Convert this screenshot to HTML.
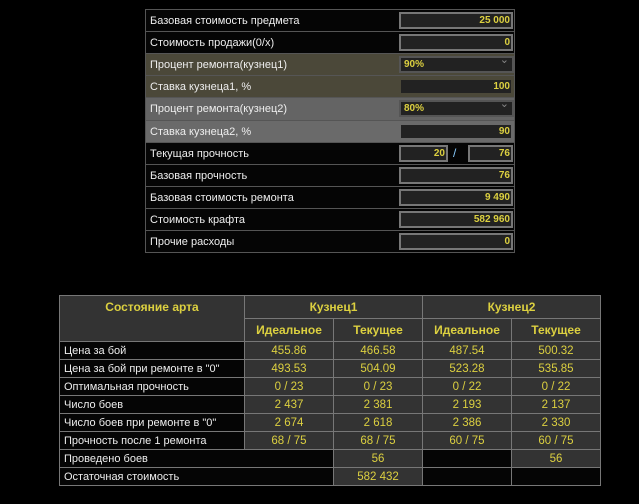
<!DOCTYPE html>
<html><head><meta charset="utf-8"><style>
body{margin:0;background:#000;width:639px;height:504px;overflow:hidden;font-family:"Liberation Sans","DejaVu Sans",sans-serif;position:relative}
.t{position:absolute;left:145px;top:9px;width:368px;border:1px solid #555;border-bottom:none}
.r{height:21px;border-bottom:1px solid #555;position:relative;color:#eee;font-size:11px;background:#050505}
.r .l{position:absolute;left:4px;top:5px}
.in{position:absolute;left:253px;top:2px;width:109px;height:13px;border:2px solid #777;background:#222;color:#dcd040;font-weight:bold;font-size:10px;text-align:right;line-height:13px;padding-right:1px;box-sizing:content-box}
.sel{text-align:left;padding-left:3px;width:107px;border-color:#555}
.sel:after{content:"⌄";position:absolute;right:3px;top:-4px;color:#888;font-weight:normal;font-size:11px}
.b{position:absolute;left:59px;top:295px;border-collapse:collapse;font-size:11.5px}
.b td{border:1px solid #777;height:17px;padding:0 4px;background:#333;color:#dcd040;text-align:center}
.b td.l{background:#050505;color:#eee;text-align:left;font-size:11px}
.b td.h{font-weight:bold;font-size:12px;height:22px}
.b td.k{background:#050505}
</style></head><body>
<div class="t">
<div class="r"><span class="l">Базовая стоимость предмета</span><div class="in">25 000</div></div>
<div class="r"><span class="l">Стоимость продажи(0/x)</span><div class="in">0</div></div>
<div class="r" style="background:#4b4839"><span class="l">Процент ремонта(кузнец1)</span><div class="in sel">90%</div></div>
<div class="r" style="background:#4b4839"><span class="l">Ставка кузнеца1, %</span><div class="in" style="border-color:#4b4839">100</div></div>
<div class="r" style="background:#646464;height:22px"><span class="l">Процент ремонта(кузнец2)</span><div class="in sel">80%</div></div>
<div class="r" style="background:#6a6a6a"><span class="l">Ставка кузнеца2, %</span><div class="in" style="border-color:#6a6a6a">90</div></div>
<div class="r"><span class="l">Текущая прочность</span><div class="in" style="width:44px">20</div><span style="position:absolute;left:307px;top:3px;color:#8cf;font-size:12px">/</span><div class="in" style="left:322px;width:40px">76</div></div>
<div class="r"><span class="l">Базовая прочность</span><div class="in">76</div></div>
<div class="r"><span class="l">Базовая стоимость ремонта</span><div class="in">9 490</div></div>
<div class="r"><span class="l">Стоимость крафта</span><div class="in">582 960</div></div>
<div class="r"><span class="l">Прочие расходы</span><div class="in">0</div></div>
</div>
<table class="b">
<tr><td class="h" rowspan="2" style="width:176px;vertical-align:top;padding-top:4px">Состояние арта</td><td class="h" colspan="2">Кузнец1</td><td class="h" colspan="2">Кузнец2</td></tr>
<tr><td class="h" style="width:80px">Идеальное</td><td class="h" style="width:80px">Текущее</td><td class="h" style="width:80px">Идеальное</td><td class="h" style="width:80px">Текущее</td></tr>
<tr><td class="l">Цена за бой</td><td>455.86</td><td>466.58</td><td>487.54</td><td>500.32</td></tr>
<tr><td class="l">Цена за бой при ремонте в "0"</td><td>493.53</td><td>504.09</td><td>523.28</td><td>535.85</td></tr>
<tr><td class="l">Оптимальная прочность</td><td>0 / 23</td><td>0 / 23</td><td>0 / 22</td><td>0 / 22</td></tr>
<tr><td class="l">Число боев</td><td>2 437</td><td>2 381</td><td>2 193</td><td>2 137</td></tr>
<tr><td class="l">Число боев при ремонте в "0"</td><td>2 674</td><td>2 618</td><td>2 386</td><td>2 330</td></tr>
<tr><td class="l">Прочность после 1 ремонта</td><td>68 / 75</td><td>68 / 75</td><td>60 / 75</td><td>60 / 75</td></tr>
<tr><td class="l" colspan="2">Проведено боев</td><td>56</td><td class="k"></td><td>56</td></tr>
<tr><td class="l" colspan="2">Остаточная стоимость</td><td>582 432</td><td class="k"></td><td class="k"></td></tr>
</table>
</body></html>
